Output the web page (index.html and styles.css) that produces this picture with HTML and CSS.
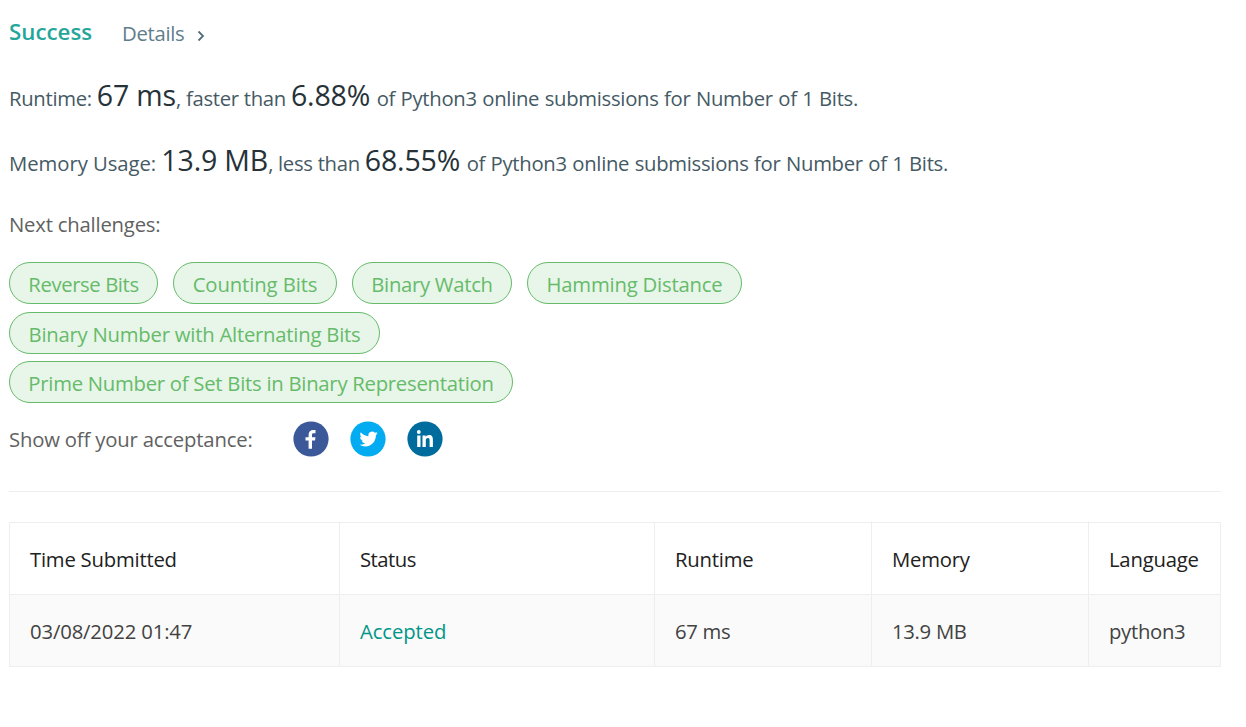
FILE: index.html
```
<!DOCTYPE html>
<html lang="en">
<head>
<meta charset="utf-8">
<title>Submission result</title>
<link rel="stylesheet" href="styles.css">
</head>
<body>
<main class="result">
  <header class="heading">
    <span class="status">Success</span>
    <a class="details">Details <svg class="chevron" viewBox="0 0 8 12"><path d="M1.5 1.5 6 6 1.5 10.5"/></svg></a>
  </header>
  <p class="stat runtime"><span class="lead">Runtime: </span><strong>67 ms</strong><span class="mid">, faster than </span><strong>6.88%</strong><span class="tail"> of Python3 online submissions for Number of 1 Bits.</span></p>
  <p class="stat memory"><span class="lead">Memory Usage: </span><strong>13.9 MB</strong><span class="mid">, less than </span><strong>68.55%</strong><span class="tail"> of Python3 online submissions for Number of 1 Bits.</span></p>
  <p class="next"><span>Next challenges:</span></p>
  <div class="challenges">
    <div class="row">
      <a class="pill reverse"><span>Reverse Bits</span></a>
      <a class="pill counting"><span>Counting Bits</span></a>
      <a class="pill watch"><span>Binary Watch</span></a>
      <a class="pill hamming"><span>Hamming Distance</span></a>
    </div>
    <div class="row"><a class="pill alternating"><span>Binary Number with Alternating Bits</span></a></div>
    <div class="row"><a class="pill prime"><span>Prime Number of Set Bits in Binary Representation</span></a></div>
  </div>
  <div class="share">
    <span class="share-label">Show off your acceptance:</span>
    <svg class="social" viewBox="0 0 36 36"><circle cx="18" cy="18" r="17.6" fill="#3b5998"/><path fill="#fff" d="M15.6 27.8V19.6h-3.1v-3.4h3.1V13.700c0-3.200 1.900-4.800 4.600-4.800 1.200 0 1.900.1 2.300.2v3.100h-1.700c-1.500 0-1.800.7-1.800 1.700v2.300h3.500l-.5 3.400h-3v8.200z"/></svg>
    <svg class="social" viewBox="0 0 36 36"><circle cx="18" cy="18" r="17.6" fill="#03abf0"/><path fill="#fff" transform="translate(9.5 8.9) scale(.76)" d="M23.95 4.57a10 10 0 0 1-2.82.77 4.96 4.96 0 0 0 2.16-2.72c-.95.55-2 .95-3.13 1.18a4.92 4.92 0 0 0-8.38 4.48C7.69 8.1 4.07 6.13 1.64 3.16a4.82 4.82 0 0 0-.67 2.48c0 1.71.87 3.21 2.19 4.1a4.9 4.9 0 0 1-2.23-.62v.06a4.92 4.92 0 0 0 3.95 4.83 5 5 0 0 1-2.21.08 4.94 4.94 0 0 0 4.6 3.42A9.87 9.87 0 0 1 0 19.54a14 14 0 0 0 7.55 2.21c9.05 0 14-7.5 14-13.99l-.02-.63a9.94 9.94 0 0 0 2.42-2.56z"/></svg>
    <svg class="social" viewBox="0 0 36 36"><circle cx="18" cy="18" r="17.6" fill="#006b9d"/><g fill="#fff"><circle cx="11.8" cy="11" r="1.9"/><path d="M10.200 14.400h3.300V26h-3.300zM15.500 14.400h3.200v1.500c.7-1.100 1.800-1.800 3.300-1.800 3 0 3.900 1.900 3.900 4.800V26h-3.300v-6.500c0-1.500-.3-2.600-1.700-2.600s-2.100 1-2.100 2.600V26h-3.300z"/></g></svg>
  </div>
  <hr class="rule">
  <table class="history">
    <colgroup><col class="c-time"><col class="c-status"><col class="c-run"><col class="c-mem"><col class="c-lang"></colgroup>
    <thead><tr><th>Time Submitted</th><th class="h-status">Status</th><th>Runtime</th><th>Memory</th><th>Language</th></tr></thead>
    <tbody><tr><td class="time">03/08/2022 01:47</td><td class="accepted">Accepted</td><td>67 ms</td><td>13.9 MB</td><td>python3</td></tr></tbody>
  </table>
</main>
</body>
</html>
```
FILE: styles.css
```
* { box-sizing: border-box; }
body {
  margin: 0;
  background: #fff;
  color: #616161;
  font: 20.3px/40px "Open Sans", "Noto Sans", sans-serif;
  letter-spacing: -0.3px;
}
.result { width: 1221px; padding: 13px 0 0 9px; }
p { margin: 0; white-space: nowrap; }
.heading { display: flex; gap: 30px; height: 40px; }
.status { width: 83px; color: #26a69a; font-weight: 600; font-size: 22.3px; letter-spacing: 0; line-height: 38px; white-space: nowrap; }
.details { color: #607d8b; }
.chevron { width: 8px; height: 12px; margin-left: 8px; vertical-align: -1px; fill: none; stroke: #546e7a; stroke-width: 1.8; }
.stat { margin-top: 25px; height: 40px; color: #455a64; }
.stat span { white-space: pre; }
.stat strong { font-size: 28.5px; font-weight: 400; letter-spacing: -0.15px; line-height: 0; color: #263238; }
.stat .tail { margin-left: 1px; word-spacing: 0.55px; }
.memory .lead { letter-spacing: -0.05px; }
.next { margin-top: 21px; height: 40px; letter-spacing: -0.2px; }
.challenges { display: grid; grid-template-rows: 50px 49px 42px; margin-top: 18px; }
.row { display: flex; gap: 15px; }
.pill {
  display: flex;
  justify-content: center;
  height: 42px;
  border: 1px solid #66bb6a;
  border-radius: 21px;
  background: #e8f5e9;
  color: #66bb6a;
  line-height: 42px;
  white-space: nowrap;
}
.reverse { width: 149px; letter-spacing: -0.4px; }
.counting { width: 164px; letter-spacing: -0.1px; }
.watch { width: 160px; }
.hamming { width: 215px; letter-spacing: -0.2px; }
.alternating { width: 371px; letter-spacing: -0.23px; }
.prime { width: 504px; letter-spacing: -0.26px; }
.share { display: flex; align-items: center; gap: 21px; height: 36px; margin-top: 18px; }
.share-label { width: 263px; letter-spacing: -0.18px; white-space: nowrap; }
.social { width: 36px; height: 36px; }
.rule { margin: 34px 0 30px; border: 0; border-top: 1px solid #eee; }
.history { width: 1212px; table-layout: fixed; border-collapse: collapse; }
.c-time { width: 330px; }
.c-status { width: 315px; }
.c-run, .c-mem { width: 217px; }
.c-lang { width: 132px; }
th, td { height: 72px; padding: 0 0 0 20px; border: 1px solid #eee; font-weight: 400; text-align: left; white-space: nowrap; }
th { color: #212121; letter-spacing: -0.22px; }
.h-status { letter-spacing: -0.5px; }
td { background: #fafafa; color: #424242; }
.time { letter-spacing: -0.15px; }
.accepted { color: #009688; letter-spacing: -0.1px; }
```
